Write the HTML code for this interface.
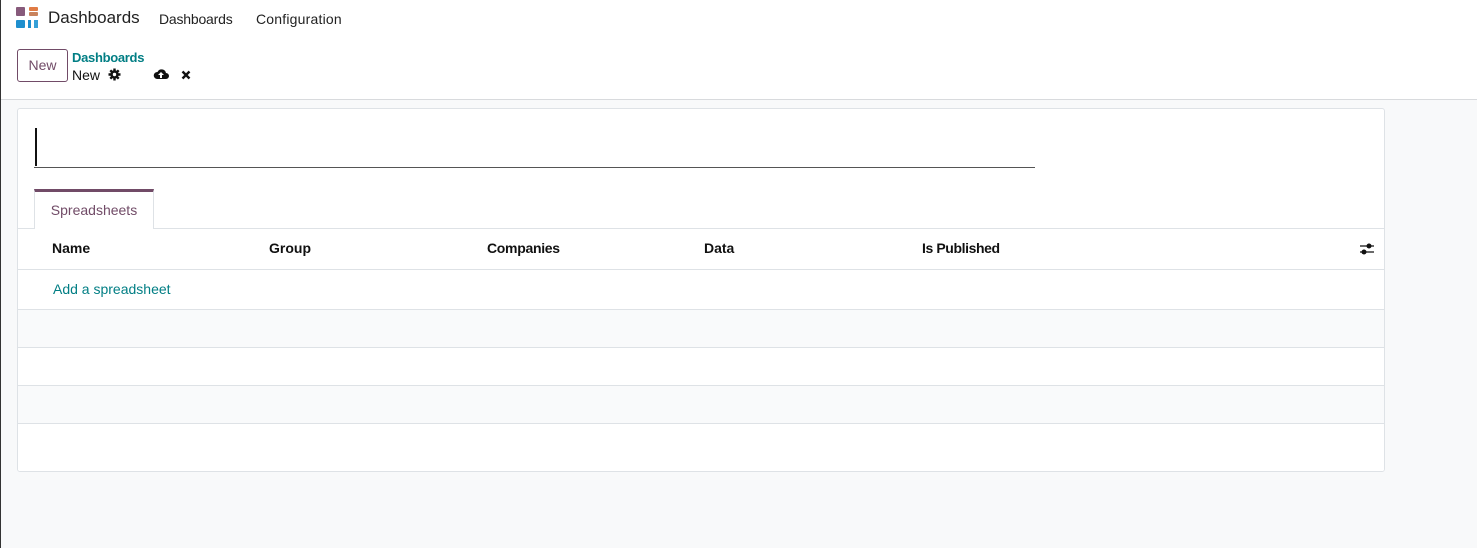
<!DOCTYPE html>
<html><head><style>
*{box-sizing:border-box;margin:0;padding:0}
body{width:1477px;height:548px;overflow:hidden;font-family:"Liberation Sans",sans-serif;background:#f8f9fa;position:relative;color:#111}
.lb{position:absolute;left:0;top:0;width:1px;height:548px;background:#333}
.top{position:absolute;left:0;top:0;width:1477px;height:100px;background:#fff;border-bottom:1px solid #d8dadd}
.abs{position:absolute;white-space:nowrap}
.card{position:absolute;left:17px;top:108px;width:1368px;height:364px;background:#fff;border:1px solid #dee2e6;border-radius:3px;overflow:hidden}
.row{position:absolute;left:0;width:1366px;border-bottom:1px solid #dee2e6}
</style></head><body>
<div class="top">
 <div class="abs" style="left:16px;top:7px;width:9px;height:9px;background:#875a7b;border-radius:1px"></div>
 <div class="abs" style="left:29px;top:7px;width:9px;height:4px;background:#e07b44;border-radius:1px"></div>
 <div class="abs" style="left:29px;top:12px;width:9px;height:4px;background:#c9835d;border-radius:1px"></div>
 <div class="abs" style="left:16px;top:20px;width:9px;height:8px;background:#1f8fce;border-radius:1px"></div>
 <div class="abs" style="left:28px;top:20px;width:3px;height:8px;background:#1f8fce"></div>
 <div class="abs" style="left:34px;top:20px;width:4px;height:8px;background:#36a0d8"></div>
 <div class="abs" style="left:48px;top:8px;font-size:17px;color:#222">Dashboards</div>
 <div class="abs" style="left:159px;top:11px;font-size:14px;color:#222;letter-spacing:-0.2px">Dashboards</div>
 <div class="abs" style="left:256px;top:11px;font-size:14px;color:#222;letter-spacing:0.2px">Configuration</div>
 <div class="abs" style="left:17px;top:49px;width:51px;height:33px;border:1px solid #714b67;border-radius:3px;color:#714b67;font-size:14px;text-align:center;line-height:31px">New</div>
 <div class="abs" style="left:72px;top:50px;font-size:13px;color:#017e84;font-weight:bold;letter-spacing:-0.3px">Dashboards</div>
 <div class="abs" style="left:72px;top:67px;font-size:14px;color:#111">New</div>
 <svg class="abs" style="left:108px;top:68px" width="13" height="13" viewBox="0 0 13 13"><g stroke="#111" stroke-width="2.4"><path d="M6.5 0.5v12M0.5 6.5h12M2.3 2.3l8.4 8.4M10.7 2.3l-8.4 8.4"/></g><circle cx="6.5" cy="6.5" r="4.2" fill="#111"/><circle cx="6.5" cy="6.5" r="1.7" fill="#fff"/></svg>
 <svg class="abs" style="left:153px;top:68px" width="16" height="12" viewBox="0 0 16 12"><path d="M4 11h9a3 3 0 0 0 0-6 4.5 4.5 0 0 0-8.5-1A3.5 3.5 0 0 0 4 11z" fill="#111"/><path d="M8 4l-3 3h2v3h2V7h2z" fill="#fff"/></svg>
 <svg class="abs" style="left:181px;top:70px" width="10" height="10"><path d="M1.5 1.5l7 7M8.5 1.5l-7 7" stroke="#111" stroke-width="2.4"/></svg>
</div>
<div class="card">
 <div class="abs" style="left:17px;top:19px;width:2px;height:38px;background:#111"></div>
 <div class="abs" style="left:16px;top:58px;width:1001px;height:1px;background:#555"></div>
 <div class="abs" style="left:16px;top:80px;width:120px;height:40px;border:1px solid #dee2e6;border-bottom:none;border-top:3px solid #714b67;background:#fff;font-size:14px;color:#714b67;text-align:center;line-height:36px;z-index:2">Spreadsheets</div>
 <div class="row" style="top:119px;height:1px"></div>
 <div class="row" style="top:120px;height:41px;font-size:14px;font-weight:bold">
  <span class="abs" style="left:34px;top:11px">Name</span>
  <span class="abs" style="left:251px;top:11px">Group</span>
  <span class="abs" style="left:469px;top:11px;letter-spacing:-0.3px">Companies</span>
  <span class="abs" style="left:686px;top:11px">Data</span>
  <span class="abs" style="left:904px;top:11px;letter-spacing:-0.4px">Is Published</span>
  <svg class="abs" style="left:1341px;top:13px" width="16" height="14"><path d="M1 4h14M1 10h14" stroke="#111" stroke-width="1.3"/><circle cx="10" cy="4" r="2.5" fill="#111"/><circle cx="5" cy="10" r="2.5" fill="#111"/></svg>
 </div>
 <div class="row" style="top:161px;height:40px;background:#fff"><span class="abs" style="left:35px;top:11px;font-size:14px;color:#017e84">Add a spreadsheet</span></div>
 <div class="row" style="top:201px;height:38px;background:#f9fafb"></div>
 <div class="row" style="top:239px;height:38px;background:#fff"></div>
 <div class="row" style="top:277px;height:38px;background:#f9fafb"></div>
 <div class="row" style="top:315px;height:48px;background:#fff;border:none"></div>
</div>
<div class="lb"></div>
</body></html>
